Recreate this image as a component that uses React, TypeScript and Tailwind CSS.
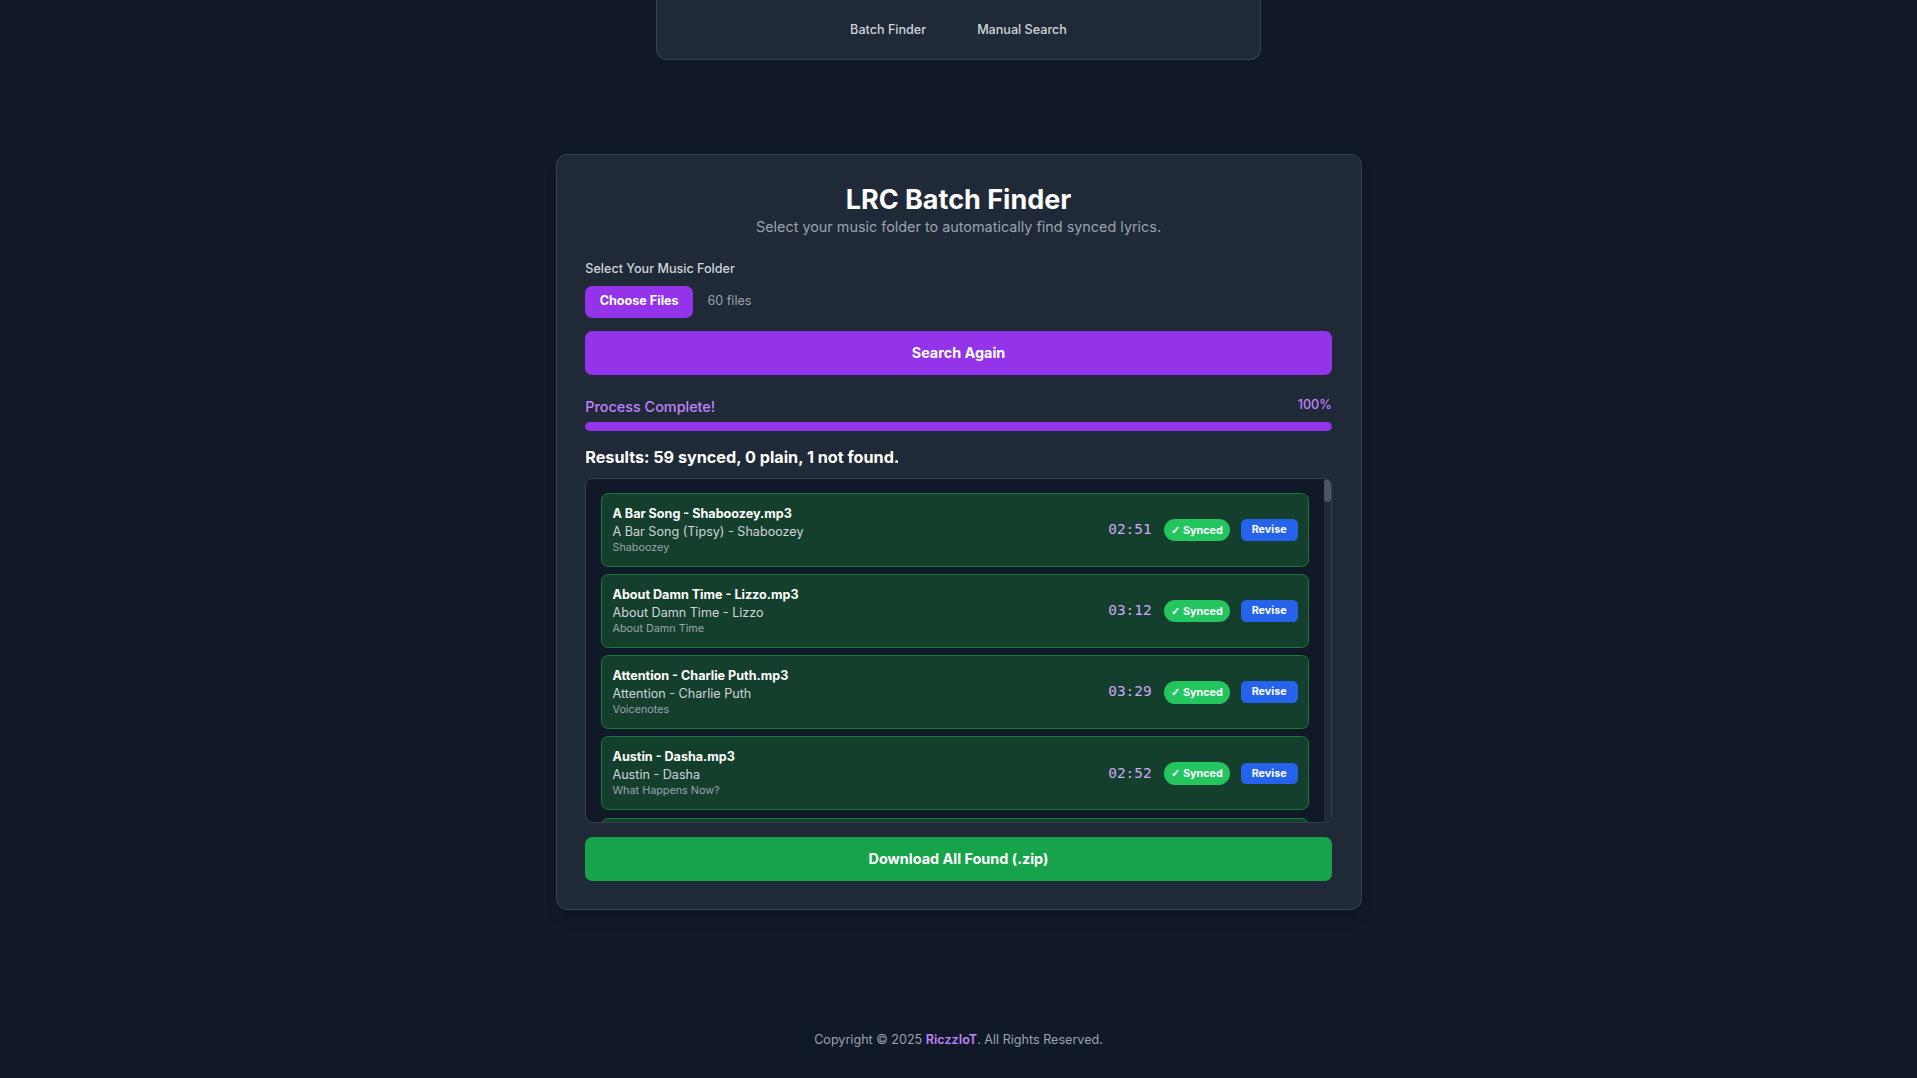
import React from "react";

type Song = { file: string; title: string; album: string; time: string };

const songs: Song[] = [
  { file: "A Bar Song - Shaboozey.mp3", title: "A Bar Song (Tipsy) - Shaboozey", album: "Shaboozey", time: "02:51" },
  { file: "About Damn Time - Lizzo.mp3", title: "About Damn Time - Lizzo", album: "About Damn Time", time: "03:12" },
  { file: "Attention - Charlie Puth.mp3", title: "Attention - Charlie Puth", album: "Voicenotes", time: "03:29" },
  { file: "Austin - Dasha.mp3", title: "Austin - Dasha", album: "What Happens Now?", time: "02:52" },
];

function SongRow({ s }: { s: Song }) {
  return (
    <div className="flex shrink-0 items-center justify-between rounded-[7.2px] border border-[#1a7a3c] bg-[#143f2d] p-[10.8px]">
      <div className="min-w-0">
        <div className="text-[12.6px] leading-[18px] font-bold text-white">{s.file}</div>
        <div className="text-[12.6px] leading-[18px] text-[#d1d5db]">{s.title}</div>
        <div className="text-[10.8px] leading-[14.4px] text-[#9ca3af]">{s.album}</div>
      </div>
      <div className="flex items-center">
        <span className="font-['DejaVu_Sans_Mono',monospace] text-[14.4px] leading-[21.6px] text-[#cfa9f7]">{s.time}</span>
        <span className="ml-[12.6px] rounded-full bg-[#22c55e] px-[7.2px] text-[10.8px] leading-[21.6px] font-bold text-white">
          <span className="font-['Noto_Sans',sans-serif]">✓</span> Synced
        </span>
        <button className="ml-[10.8px] rounded-[5.4px] bg-[#2563eb] px-[10.8px] text-[10.8px] leading-[21.6px] font-bold text-white">
          Revise
        </button>
      </div>
    </div>
  );
}

export default function App() {
  return (
    <div className="min-h-screen bg-[#111827] flex flex-col items-center font-['Inter',sans-serif]">
      <header className="w-[605px] h-[60px] bg-[#1f2937] border border-t-0 border-[#374151] rounded-b-[11px] flex items-center justify-center gap-[51px] pt-[1px]">
        <span className="text-[12.6px] leading-[18px] font-medium text-[#d1d5db]">Batch Finder</span>
        <span className="text-[12.6px] leading-[18px] font-medium text-[#d1d5db]">Manual Search</span>
      </header>

      <main className="mt-[94px] w-[806px] bg-[#1f2937] border border-[#374151] rounded-[11px] p-[28.8px] shadow-lg">
        <h1 className="text-center text-[27px] leading-[32.4px] font-bold text-white">LRC Batch Finder</h1>
        <p className="text-center text-[14.4px] leading-[21.6px] text-[#9ca3af]">
          Select your music folder to automatically find synced lyrics.
        </p>

        <div className="mt-[22.6px] text-[12.6px] leading-[18px] font-medium text-[#d1d5db]">Select Your Music Folder</div>
        <div className="mt-[7.2px] flex items-center">
          <button className="h-[32.4px] rounded-[7.2px] bg-[#9333ea] px-[14.4px] text-[12.6px] font-bold text-white">
            Choose Files
          </button>
          <span className="ml-[14.4px] text-[12.6px] text-[#9ca3af]">60 files</span>
        </div>

        <button className="mt-[13.4px] w-full h-[43.2px] rounded-[7.2px] bg-[#9333ea] text-[14.4px] font-bold text-white">
          Search Again
        </button>

        <div className="mt-[21.6px] flex justify-between">
          <span className="text-[14.4px] leading-[21.6px] font-medium text-[#c084fc]">Process Complete!</span>
          <span className="text-[12.6px] leading-[18px] font-medium text-[#c084fc]">100%</span>
        </div>
        <div className="mt-[4.4px] h-[8.6px] w-full rounded-full bg-[#374151] overflow-hidden">
          <div className="h-full w-full rounded-full bg-[#9333ea]" />
        </div>

        <h2 className="mt-[14.4px] text-[16.2px] leading-[25.2px] font-bold text-white">
          Results: 59 synced, 0 plain, 1 not found.
        </h2>

        <div className="mt-[7.2px] h-[345.6px] flex overflow-hidden rounded-[7.2px] border border-[#374151] bg-[#111827]">
          <div className="flex-1 min-w-0 overflow-hidden p-[14.4px] flex flex-col gap-[7.2px]">
            {songs.map((s, i) => (
              <SongRow key={i} s={s} />
            ))}
            <div className="h-[74px] shrink-0 rounded-[7.2px] border border-[#1a7a3c] bg-[#143f2d]" />
          </div>
          <div className="w-[7px] shrink-0 bg-[#1f2937]">
            <div className="h-[23px] w-full rounded-full bg-[#4b5563]" />
          </div>
        </div>

        <button className="mt-[14.4px] w-full h-[43.2px] rounded-[7.2px] bg-[#16a34a] text-[14.4px] font-bold text-white">
          Download All Found (.zip)
        </button>
      </main>

      <footer className="mt-[121px] text-[12.6px] leading-[18px] text-[#9ca3af]">
        Copyright © 2025 <span className="font-semibold text-[#c084fc]">RiczzIoT</span>. All Rights Reserved.
      </footer>
    </div>
  );
}
